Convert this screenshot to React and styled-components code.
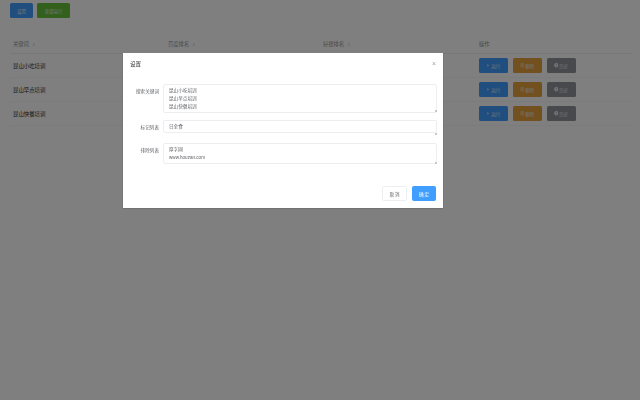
import React from 'react'
import styled, { createGlobalStyle } from 'styled-components'

const GlobalStyle = createGlobalStyle`
  html, body { margin: 0; padding: 0; background: #fff; }
  body {
    font-family: "Liberation Sans", "Noto Sans CJK SC", sans-serif;
    color: #606266;
  }
`

const Page = styled.div`
  width: 640px;
  height: 400px;
  padding: 3px 8px 0 10px;
  box-sizing: border-box;
  overflow: hidden;
`

const Toolbar = styled.div`
  display: flex;
  gap: 4px;
  height: 15px;
`

const TopButton = styled.button`
  height: 15px;
  padding: 0;
  width: ${p => p.$width}px;
  border: 0;
  border-radius: 1.5px;
  background: ${p => p.$color};
  color: #e8e8e8;
  font: 4.5px "Noto Sans CJK SC", sans-serif;
`

const Table = styled.div`
  margin-top: 17px;
`

const Row = styled.div`
  display: grid;
  grid-template-columns: 155px 155px 156px 1fr;
  align-items: center;
  height: ${p => (p.$head ? 19 : 24)}px;
  padding-left: 3px;
  border-bottom: 0.5px solid ${p => (p.$head ? '#ebeef5' : '#f6f7f9')};
  box-sizing: border-box;
  font: ${p => (p.$head ? '5.3px' : '5.4px')} "Noto Sans CJK SC", sans-serif;
  color: ${p => (p.$head ? '#909399' : '#222')};
`

const Sort = styled.span`
  margin-left: 3px;
  font-size: 4px;
  color: #c0c4cc;
`

const Actions = styled.div`
  display: flex;
  gap: 5px;
  margin-left: -0.5px;
`

const ActionButton = styled.button`
  display: flex;
  align-items: center;
  justify-content: center;
  gap: 1px;
  width: 29px;
  height: 15px;
  padding: 0;
  border: 0;
  border-radius: 1.5px;
  background: ${p => p.$color};
  color: #e8e8e8;
  font: 4.5px "Noto Sans CJK SC", sans-serif;
  svg { width: 4.5px; height: 4.5px; }
`

const Overlay = styled.div`
  position: fixed;
  inset: 0;
  background: rgba(0, 0, 0, 0.5);
`

const Dialog = styled.div`
  position: absolute;
  left: 123px;
  top: 53px;
  width: 320px;
  height: 155px;
  background: #fff;
  box-shadow: 0 0.5px 1.5px rgba(0, 0, 0, 0.3);
  box-sizing: border-box;
  padding: 0 6px 0 7px;
  display: flex;
  flex-direction: column;
`

const DialogHead = styled.div`
  display: flex;
  align-items: center;
  justify-content: space-between;
  height: 21px;
  padding-right: 1px;
  font: 5.6px "Noto Sans CJK SC", sans-serif;
  color: #303133;
`

const Close = styled.span`
  font: 7px "Liberation Sans", sans-serif;
  color: #a0a3a8;
`

const Form = styled.div`
  display: flex;
  flex-direction: column;
  margin-top: 10px;
`

const Field = styled.div`
  display: grid;
  grid-template-columns: 29px 1fr;
  column-gap: 4px;
  margin-bottom: ${p => p.$gap}px;
`

const Label = styled.div`
  text-align: right;
  font: 4.6px/15.5px "Noto Sans CJK SC", sans-serif;
  color: #606266;
`

const TextWrap = styled.div`
  position: relative;
  &::after {
    content: '';
    position: absolute;
    right: 0.5px;
    bottom: 0.5px;
    width: 2px;
    height: 2px;
    background: #c8c8c8;
  }
`

const TextBox = styled.textarea`
  display: block;
  width: 100%;
  height: ${p => p.$height}px;
  margin: 0;
  padding: 2px 5px;
  box-sizing: border-box;
  border: 0.5px solid #eceef2;
  border-radius: 2px;
  background: #fff;
  color: #606266;
  font: 4.6px/8px "Liberation Sans", "Noto Sans CJK SC", sans-serif;
  outline: none;
  resize: none;
  overflow: hidden;
`

const Footer = styled.div`
  display: flex;
  justify-content: flex-end;
  gap: 5px;
  margin-top: auto;
  padding: 0 1px 7px 0;
`

const FooterButton = styled.button`
  width: ${p => (p.$primary ? 24 : 25)}px;
  height: 15px;
  padding: 0;
  border: 0.5px solid ${p => (p.$primary ? '#409eff' : '#eceef2')};
  border-radius: 1.5px;
  background: ${p => (p.$primary ? '#409eff' : '#fff')};
  color: ${p => (p.$primary ? '#fff' : '#606266')};
  font: 4.6px "Noto Sans CJK SC", sans-serif;
`

const keywords = ['昆山小吃培训', '昆山早点培训', '昆山快餐培训']

const PlayIcon = () => (
  <svg viewBox="0 0 10 10"><path d="M3 2.5l4 2.5-4 2.5z" fill="currentColor" /></svg>
)

const TrashIcon = () => (
  <svg viewBox="0 0 10 10" fill="none" stroke="currentColor">
    <path d="M1 2h8M2 2v7h6V2M4 1h2M4 4v3M6 4v3" />
  </svg>
)

const InfoIcon = () => (
  <svg viewBox="0 0 10 10">
    <circle cx="5" cy="5" r="4.8" fill="currentColor" />
    <path d="M5 2.5v3M5 6.8v1" stroke="#555" />
  </svg>
)

export default function App() {
  return (
    <Page>
      <GlobalStyle />
      <Toolbar>
        <TopButton $color="#409eff" $width={23}>设置</TopButton>
        <TopButton $color="#67c23a" $width={33}>全部运行</TopButton>
      </Toolbar>
      <Table>
        <Row $head>
          <span>关键词<Sort>⇕</Sort></span>
          <span>百度排名<Sort>⇕</Sort></span>
          <span>好搜排名<Sort>⇕</Sort></span>
          <span>操作</span>
        </Row>
        {keywords.map(k => (
          <Row key={k}>
            <span>{k}</span>
            <span />
            <span />
            <Actions>
              <ActionButton $color="#409eff"><PlayIcon />运行</ActionButton>
              <ActionButton $color="#e6a23c"><TrashIcon />删除</ActionButton>
              <ActionButton $color="#909399"><InfoIcon />历史</ActionButton>
            </Actions>
          </Row>
        ))}
      </Table>
      <Overlay>
        <Dialog>
          <DialogHead>
            <span>设置</span>
            <Close>×</Close>
          </DialogHead>
          <Form>
            <Field $gap={7.5}>
              <Label>搜索关键词</Label>
              <TextWrap>
                <TextBox $height={28.5} readOnly value={keywords.join('\n')} />
              </TextWrap>
            </Field>
            <Field $gap={7.5}>
              <Label>标记列表</Label>
              <TextWrap>
                <TextBox $height={13} readOnly value="日全食" />
              </TextWrap>
            </Field>
            <Field $gap={0}>
              <Label>排除列表</Label>
              <TextWrap>
                <TextBox $height={21} readOnly value={'厚字网\nwww.houzan.com'} />
              </TextWrap>
            </Field>
          </Form>
          <Footer>
            <FooterButton>取 消</FooterButton>
            <FooterButton $primary>确 定</FooterButton>
          </Footer>
        </Dialog>
      </Overlay>
    </Page>
  )
}
